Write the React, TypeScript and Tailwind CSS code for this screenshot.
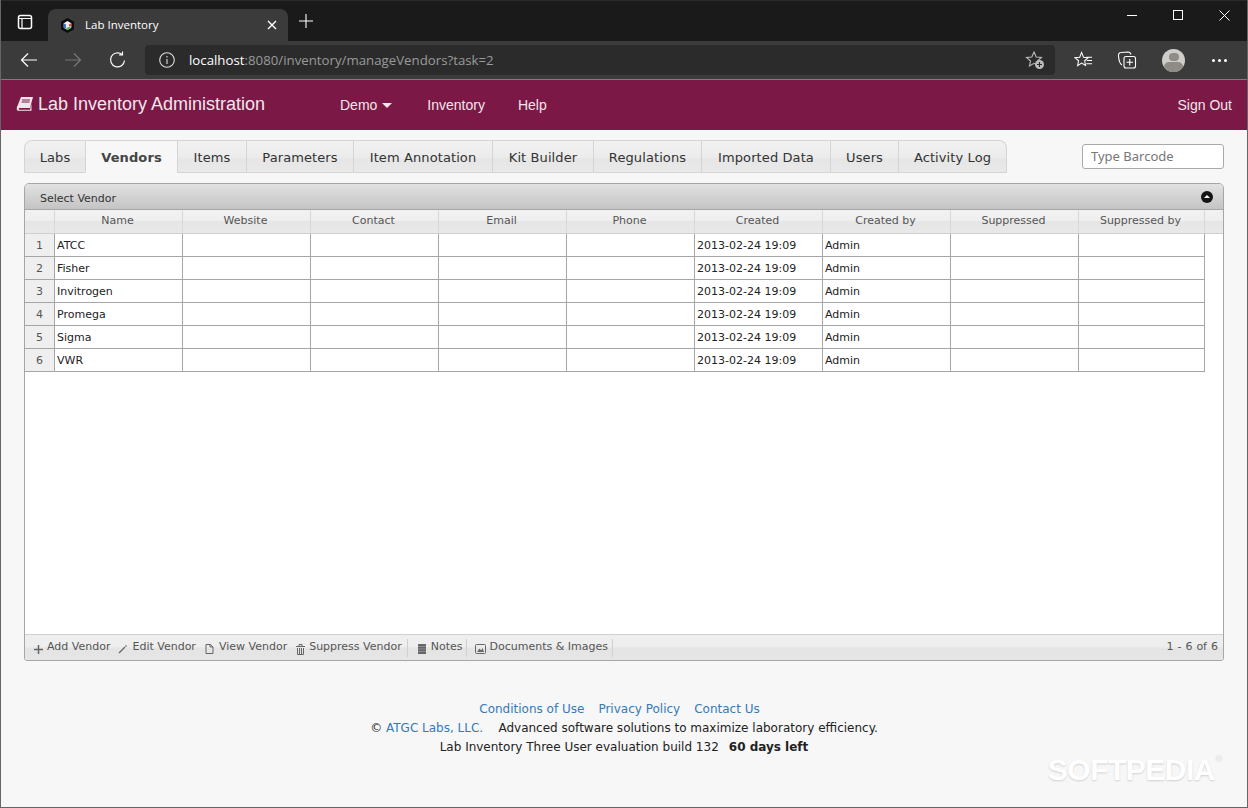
import React from "react";

const tabs: [string, number][] = [
  ["Labs", 62], ["Vendors", 92], ["Items", 69], ["Parameters", 107], ["Item Annotation", 139],
  ["Kit Builder", 101], ["Regulations", 108], ["Imported Data", 129], ["Users", 68], ["Activity Log", 108],
];
const cols = ["Name", "Website", "Contact", "Email", "Phone", "Created", "Created by", "Suppressed", "Suppressed by"];
const vendors = ["ATCC", "Fisher", "Invitrogen", "Promega", "Sigma", "VWR"];

function ChromeBar() {
  return (
    <div className="flex flex-col">
      <div className="h-[41px] bg-[#1a1a1a] border-t border-[#2a2a2a] flex items-end">
        <div className="w-[48px] h-full flex items-center justify-center pt-[1px] pl-[1px]">
          <svg width="16" height="16" viewBox="0 0 16 16" fill="none" stroke="#fff" strokeWidth="1.5">
            <rect x="1.5" y="1.5" width="13" height="13" rx="2" />
            <path d="M1.5 4.500h13M5 4.500v10" strokeWidth="1.200" />
          </svg>
        </div>
        <div className="w-[240px] h-[32px] bg-[#3b3b3b] rounded-t-lg flex items-center pl-[12px] pr-[11px]">
          <svg width="15" height="15" viewBox="0 0 15 15" className="shrink-0">
            <path d="M7.500 0 14 3.700v7.600L7.500 15 1 11.300V3.700z" fill="#0d0d0d" />
            <path d="M7.500 3 11.300 5.200v4.600L7.500 12 3.700 9.800V5.200z" fill="#f2f2f2" />
            <path d="M3.700 5.200 6 6.500v3.800L3.700 9.800z" fill="#3b6fd0" />
            <path d="M9 6.200l2.300-1v3L9 8.500z" fill="#d9534f" />
            <path d="M6 10.300l3-1.600 2 1L7.500 12z" fill="#4caf50" />
          </svg>
          <span className="ml-[10px] text-[11.500px] text-white font-['Open_Sans',sans-serif] flex-1">Lab Inventory</span>
          <svg width="10" height="10" viewBox="0 0 10 10" stroke="#fff" strokeWidth="1.400"><path d="M1 1l8 8M9 1l-8 8" /></svg>
        </div>
        <div className="h-full flex items-center ml-[10px]">
          <svg width="16" height="16" viewBox="0 0 16 16" stroke="#fff" strokeWidth="1.100"><path d="M8 1v14M1 8h14" /></svg>
        </div>
        <div className="flex-1" />
        <div className="h-full flex items-start pt-[8px] pr-[1px]">
          <div className="w-[46px] h-[12px] flex items-center justify-center">
            <div className="w-[10px] h-px bg-white" />
          </div>
          <div className="w-[46px] h-[12px] flex items-center justify-center">
            <div className="w-[10px] h-[10px] border border-white" />
          </div>
          <div className="w-[46px] h-[12px] flex items-center justify-center">
            <svg width="11" height="11" viewBox="0 0 11 11" stroke="#fff" strokeWidth="1"><path d="M.5.500l10 10M10.500.500l-10 10" /></svg>
          </div>
        </div>
      </div>
      <div className="h-[38px] bg-[#3b3b3b] flex items-center">
        <div className="w-[145px] flex items-center shrink-0 pl-[20px]">
          <svg width="18" height="16" viewBox="0 0 18 16" fill="none" stroke="#fff" strokeWidth="1.200"><path d="M17 8H1.500M8 1.500 1.500 8 8 14.500" /></svg>
          <svg width="18" height="16" viewBox="0 0 18 16" fill="none" stroke="#777" strokeWidth="1.200" className="ml-[26px]"><path d="M1 8h15.500M10 1.500 16.500 8 10 14.500" /></svg>
          <svg width="18" height="18" viewBox="0 0 18 18" fill="none" stroke="#fff" strokeWidth="1.200" className="ml-[27px]"><path d="M15.500 9.500a7 7 0 1 1-2.500-6M13.500 .5v3.500H10" /></svg>
        </div>
        <div className="w-[910px] h-[30px] bg-[#2b2b2b] rounded flex items-center pl-[14px] pr-[10px] shrink-0">
          <svg width="16" height="16" viewBox="0 0 16 16" fill="none" stroke="#ddd" strokeWidth="1.100" className="shrink-0">
            <circle cx="8" cy="8" r="7.300" /><path d="M8 7v5M8 4v1.500" />
          </svg>
          <span className="ml-[14px] text-[13.250px] leading-[18px] font-['Open_Sans',sans-serif] flex-1 whitespace-nowrap">
            <span className="text-white">localhost</span><span className="text-[#9a9a9a]">:8080/inventory/manageVendors?task=2</span>
          </span>
          <svg width="20" height="20" viewBox="0 0 20 20" fill="none" stroke="#bbb" strokeWidth="1.100">
            <path d="M9 2l2.200 5 5.300.5-4 3.500 1 5-4.500-2.700L4.500 16l1-5-4-3.500 5.300-.5z" />
            <circle cx="14.500" cy="14.500" r="4.500" fill="#bbb" stroke="none" />
            <path d="M14.500 12v5M12 14.500h5" stroke="#2b2b2b" />
          </svg>
        </div>
        <div className="flex items-center pl-[19px]">
          <svg width="19" height="20" viewBox="0 0 20 20" fill="none" stroke="#fff" strokeWidth="1.100">
            <path d="M8 2l2 5 5 .5-3.800 3.300 1 5L8 13.200 3.800 16l1-5.200L1 7.500l5-.5z" />
            <path d="M13 7h6M13.500 10.500h5.500M13 14h6" />
          </svg>
          <svg width="20" height="20" viewBox="0 0 20 20" fill="none" stroke="#fff" strokeWidth="1.100" className="ml-[24px]">
            <path d="M5 15C3 14 2 12 1.500 6 1.300 3.500 2.500 2.500 4 2.500L11 2c1.500 0 2.500.5 3 2.500" />
            <rect x="7" y="6.500" width="11.500" height="11.500" rx="2" />
            <path d="M12.750 9v6.500M9.500 12.250h6.500" />
          </svg>
          <div className="ml-[25px] w-[23px] h-[23px] rounded-full bg-[#cfcdc9] overflow-hidden flex flex-col items-center">
            <div className="w-[10px] h-[10px] rounded-full bg-[#8f8c88] mt-[4px]" />
            <div className="w-[19px] h-[12px] rounded-full bg-[#8f8c88] mt-[1px]" />
          </div>
          <div className="ml-[27px] flex gap-[3px]">
            <div className="w-[3px] h-[3px] rounded-full bg-white" />
            <div className="w-[3px] h-[3px] rounded-full bg-white" />
            <div className="w-[3px] h-[3px] rounded-full bg-white" />
          </div>
        </div>
      </div>
      <div className="h-px bg-[#7d7d7d]" />
    </div>
  );
}

function AppHeader() {
  return (
    <div className="h-[50px] bg-[#7b1845] flex items-center pl-[16px] pr-[16px] text-[#f2e6ec] font-['Liberation_Sans',sans-serif] text-[14px]">
      <svg width="18" height="16" viewBox="0 0 18 16" className="shrink-0 -mt-[2px]">
        <path d="M5 1h12l-3 11H3.500C2.500 12 2.300 13.800 3.500 13.800H14l1.500-6v7H3C0.500 15 .5 12.500 1 11z" fill="#f2e6ec" />
        <path d="M6 4h8M5.500 6h8" stroke="#7b1845" strokeWidth="1" />
      </svg>
      <span className="text-[18px] ml-[4px] -mt-[1px] w-[302px] whitespace-nowrap">Lab Inventory Administration</span>
      <span>Demo</span>
      <span className="ml-[5px] w-0 h-0 border-x-[5px] border-x-transparent border-t-[5px] border-t-[#f2e6ec]" />
      <span className="ml-[35px]">Inventory</span>
      <span className="ml-[33px]">Help</span>
      <span className="ml-auto">Sign Out</span>
    </div>
  );
}

function TabsRow() {
  return (
    <div className="flex items-start justify-between pl-[24px] pr-[24px] pt-[10px]">
      <div className="flex h-[33px]">
        {tabs.map(([t, w], i) => (
          <div
            key={t}
            style={{ width: w }}
            className={
              "flex items-center justify-center text-[13px] tracking-[0.1px] border-t border-r border-[#d4d4d4] " +
              (t === "Vendors"
                ? "pt-[1px] bg-[#f7f7f7] font-bold text-[#444] "
                : "pt-[3px] bg-[linear-gradient(#f1f1f1,#ececec_50%,#e6e6e6_60%,#e9e9e9)] text-[#333] border-b ") +
              (i === 0 ? "rounded-tl-lg border-l " : "") +
              (i === tabs.length - 1 ? "rounded-tr-lg " : "")
            }
          >
            {t}
          </div>
        ))}
      </div>
      <div className="mt-[4px] w-[142px] h-[25px] bg-white border border-[#aaa] rounded-[3px] flex items-center pl-[8px] text-[13px] text-[#777] font-['Noto_Sans',sans-serif]">
        Type Barcode
      </div>
    </div>
  );
}

const Plus = () => (
  <svg width="9" height="9" viewBox="0 0 9 9" stroke="#666" strokeWidth="1.500"><path d="M4.500 0v9M0 4.500h9" /></svg>
);
const Pencil = () => (
  <svg width="10" height="10" viewBox="0 0 10 10" stroke="#666" strokeWidth="1.300" fill="none"><path d="M1 9l6-6M7.500 1.500l1 1" /></svg>
);
const Doc = () => (
  <svg width="9" height="10" viewBox="0 0 9 10" stroke="#666" strokeWidth="1" fill="none"><path d="M1 .5h4.500L8 3v6.500H1zM5 .5V3h3" /></svg>
);
const Trash = () => (
  <svg width="9" height="11" viewBox="0 0 9 11" stroke="#666" strokeWidth="1" fill="none"><path d="M0 2.500h9M3 2.500v-2h3v2M1.500 4v6.500h6V4M3.500 4v6M5.500 4v6" /></svg>
);
const Note = () => (
  <svg width="8" height="10" viewBox="0 0 8 10"><rect width="8" height="10" fill="#666" /><path d="M0 2.500h8M0 5h8M0 7.500h8" stroke="#aaa" strokeWidth=".6" /></svg>
);
const Pic = () => (
  <svg width="11" height="10" viewBox="0 0 11 10" fill="none" stroke="#666"><rect x=".5" y=".5" width="10" height="9" rx="1" /><path d="M2 8l2.500-3.500L6 6.500 7.500 4 9 8z" fill="#666" stroke="none" /></svg>
);

function ToolItem({ icon, label, cls }: { icon: React.ReactNode; label: string; cls: string }) {
  return (
    <div className={"flex items-center h-[18px] " + cls}>
      <span className="w-[16px] flex justify-center items-center mt-[3px]">{icon}</span>
      <span className="ml-[1px] whitespace-nowrap">{label}</span>
    </div>
  );
}

function Grid() {
  return (
    <div className="mx-[24px] mt-[10px] h-[478px] flex flex-col border border-[#a6a6a6] rounded-t-[5px] rounded-b-[3px] bg-white text-[11px] overflow-hidden">
      <div className="h-[26px] shrink-0 bg-gradient-to-b from-[#e2e2e2] to-[#c4c4c4] flex items-center pl-[15px] pr-[10px] text-[#333] border-b border-[#a6a6a6]">
        <span className="pt-[5px]">Select Vendor</span>
        <span className="ml-auto w-[12px] h-[12px] rounded-full bg-[#151515] flex items-center justify-center">
          <span className="w-0 h-0 border-x-[3px] border-x-transparent border-b-[3px] border-b-white" />
        </span>
      </div>
      <div className="h-[24px] shrink-0 flex bg-[linear-gradient(#f1f1f1,#efefef_45%,#e6e6e6_50%,#e8e8e8)] border-b border-[#d0d0d0] text-[#555]">
        <div className="w-[30px] shrink-0 border-r border-[#d8d8d8]" />
        {cols.map((c, i) => (
          <div
            key={c}
            className={
              "shrink-0 border-r border-[#d8d8d8] flex items-center justify-center pb-[1px] pr-[2px] " +
              (i === 8 ? "w-[126px]" : "w-[128px]")
            }
          >
            {c}
          </div>
        ))}
      </div>
      <div className="flex-1">
        {vendors.map((v, i) => (
          <div key={v} className="h-[23px] flex w-[1180px] border-b border-[#a6a6a6] text-[#222]">
            <div className="w-[30px] shrink-0 bg-[#efefef] border-r border-[#a6a6a6] flex items-center justify-center pt-[2px] text-[#555]">{i + 1}</div>
            <div className="w-[128px] shrink-0 border-r border-[#a6a6a6] flex items-center pl-[2px] pt-[2px]">{v}</div>
            {[0, 1, 2, 3].map((k) => (
              <div key={k} className="w-[128px] shrink-0 border-r border-[#a6a6a6]" />
            ))}
            <div className="w-[128px] shrink-0 border-r border-[#a6a6a6] flex items-center pl-[2px] pt-[2px] whitespace-nowrap">2013-02-24 19:09</div>
            <div className="w-[128px] shrink-0 border-r border-[#a6a6a6] flex items-center pl-[2px] pt-[2px]">Admin</div>
            <div className="w-[128px] shrink-0 border-r border-[#a6a6a6]" />
            <div className="w-[126px] shrink-0 border-r border-[#a6a6a6]" />
          </div>
        ))}
      </div>
      <div className="h-[26px] shrink-0 flex items-center bg-[linear-gradient(#efefef,#eeeeee_45%,#e4e4e4_55%,#e6e6e6)] border-t border-[#d0d0d0] text-[#555] pl-[5px] pr-[5px]">
        <ToolItem icon={<Plus />} label="Add Vendor" cls="" />
        <ToolItem icon={<Pencil />} label="Edit Vendor" cls="ml-[5px]" />
        <ToolItem icon={<Doc />} label="View Vendor" cls="ml-[6px]" />
        <ToolItem icon={<Trash />} label="Suppress Vendor" cls="ml-[5px] pr-[5px] border-r border-[#d0d0d0]" />
        <ToolItem icon={<Note />} label="Notes" cls="ml-[6px] pr-[3px] border-r border-[#d0d0d0]" />
        <ToolItem icon={<Pic />} label="Documents & Images" cls="ml-[6px] pr-[4px] border-r border-[#d0d0d0]" />
        <span className="ml-auto [word-spacing:0.5px]">1 - 6 of 6</span>
      </div>
    </div>
  );
}

function Footer() {
  return (
    <div className="mt-[39px] flex flex-col items-center text-[12px] leading-[19px] text-[#222]">
      <div className="text-[#337ab7] flex gap-[14px] mr-[9px]">
        <span>Conditions of Use</span><span>Privacy Policy</span><span>Contact Us</span>
      </div>
      <div className="whitespace-pre">
        © <span className="text-[#337ab7]">ATGC Labs, LLC.</span>{"    "}Advanced software solutions to maximize laboratory efficiency.
      </div>
      <div className="whitespace-pre">
        Lab Inventory Three User evaluation build 132<b className="ml-[10px]">60 days left</b>
      </div>
    </div>
  );
}

export default function App() {
  return (
    <div className="relative w-[1248px] h-[808px] overflow-hidden bg-[#f7f7f7] font-['DejaVu_Sans','Verdana',sans-serif] border-l border-r border-b border-[#666]">
      <div className="-mx-px">
        <ChromeBar />
        <AppHeader />
        <TabsRow />
        <Grid />
        <Footer />
      </div>
      <div className="absolute right-[32px] bottom-[22px] text-[30px] leading-none font-bold text-white font-['Liberation_Sans',sans-serif] tracking-[-0.5px] [text-shadow:0_1px_2px_rgba(0,0,0,0.16)]">
        SOFTPEDIA
      </div>
      <div className="absolute right-[24px] bottom-[43px] text-[8px] leading-none text-white [text-shadow:0_0_1px_rgba(0,0,0,0.3)]">®</div>
    </div>
  );
}
